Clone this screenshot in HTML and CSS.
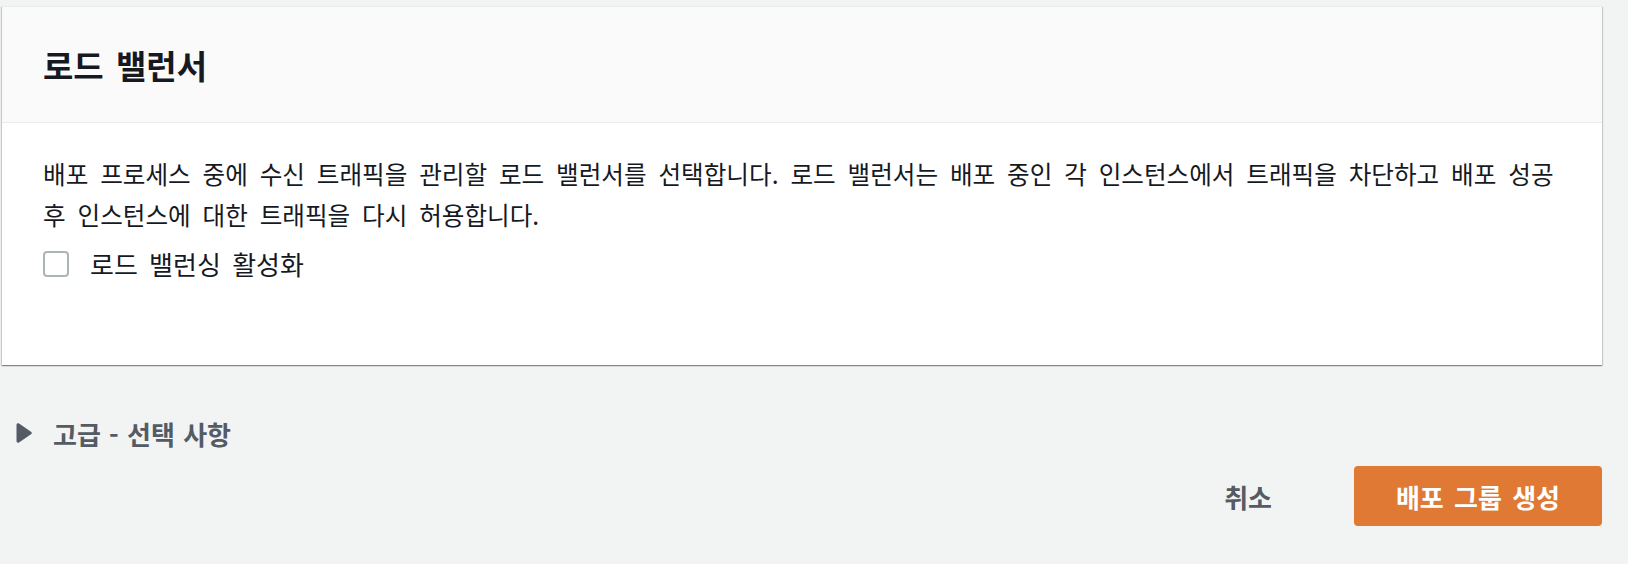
FILE: index.html
```html
<!DOCTYPE html>
<html lang="ko">
<head>
<meta charset="utf-8">
<link rel="stylesheet" href="styles.css">
</head>
<body>
<div class="page">
  <section class="card">
    <header class="card-header">
      <h2 class="card-title">로드 밸런서</h2>
    </header>
    <div class="card-body">
      <p class="desc">배포 프로세스 중에 수신 트래픽을 관리할 로드 밸런서를 선택합니다. 로드 밸런서는 배포 중인 각 인스턴스에서 트래픽을 차단하고 배포 성공 후 인스턴스에 대한 트래픽을 다시 허용합니다.</p>
      <label class="check">
        <span class="box"></span>
        <span class="check-label">로드 밸런싱 활성화</span>
      </label>
    </div>
  </section>
  <div class="advanced">
    <svg class="caret" width="16" height="20" viewBox="0 0 16 20"><path d="M0.5 2 C0.5 0.6 1.9 -0.1 3 0.6 L15 8.7 C16 9.3 16 10.7 15 11.3 L3 19.4 C1.9 20.1 0.5 19.4 0.5 18 Z" fill="#545b64"/></svg>
    <span class="advanced-label">고급 - 선택 사항</span>
  </div>
  <div class="actions">
    <button class="btn-cancel" type="button">취소</button>
    <button class="btn-primary" type="button">배포 그룹 생성</button>
  </div>
</div>
</body>
</html>
```

FILE: styles.css
```css
html, body {
  margin: 0;
  padding: 0;
  background: #f2f3f3;
}
body {
  font-family: "Noto Sans CJK KR", "Noto Sans", sans-serif;
  color: #16191f;
}
.page {
  width: 1600px;
  padding: 6px 0 0 2px;
}
.card {
  background: #ffffff;
  border-top: 1px solid #eaeded;
  box-shadow: 0 1px 1px 0 rgba(0, 28, 36, 0.3), 1px 1px 1px 0 rgba(0, 28, 36, 0.15), -1px 1px 1px 0 rgba(0, 28, 36, 0.15);
}
.card-header {
  height: 115px;
  display: flex;
  align-items: center;
  padding: 0 41px;
  background: #fafafa;
  border-bottom: 1px solid #eaeded;
}
.card-title {
  margin: 0;
  font-size: 33px;
  font-weight: 700;
  word-spacing: 3px;
  line-height: 40px;
  color: #16191f;
}
.card-body {
  padding: 30px 25px 81px 41px;
}
.desc {
  margin: 0;
  font-size: 24.6px;
  line-height: 41px;
  word-spacing: 5px;
  word-break: keep-all;
}
.check {
  display: flex;
  align-items: center;
  height: 41px;
  gap: 21px;
  margin-top: 8px;
}
.box {
  width: 22px;
  height: 22px;
  border: 2px solid #aab7b8;
  border-radius: 4px;
  background: #fff;
}
.check-label {
  font-size: 26px;
  word-spacing: 4px;
}
.advanced {
  display: flex;
  align-items: center;
  gap: 21px;
  margin-top: 48px;
  padding-left: 14px;
  height: 40px;
}
.advanced-label {
  font-size: 26px;
  font-weight: 700;
  color: #545b64;
  word-spacing: 1px;
}
.actions {
  display: flex;
  justify-content: flex-end;
  align-items: center;
  margin-top: 13px;
  gap: 52px;
}
.btn-cancel {
  border: none;
  background: transparent;
  font-family: inherit;
  font-size: 26px;
  font-weight: 700;
  color: #545b64;
  padding: 0 30px;
  height: 60px;
}
.btn-primary {
  width: 248px;
  height: 60px;
  border: none;
  border-radius: 4px;
  background: #df7934;
  color: #ffffff;
  font-family: inherit;
  font-size: 26px;
  font-weight: 700;
  word-spacing: 3px;
}
```
